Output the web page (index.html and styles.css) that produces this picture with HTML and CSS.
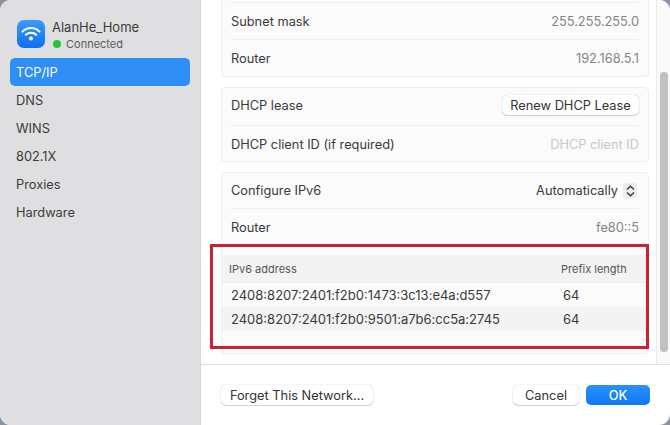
FILE: index.html
```html
<!DOCTYPE html>
<html>
<head>
    <title>Network Details</title>
    <link rel="stylesheet" href="styles.css">
</head>
<body>
    <div class="window">
        <div class="sidebar">
            <div class="network">
                <div class="wifiIcon">
                    <svg width="20" height="16" viewBox="0 0 20 16">
                        <path d="M1.5 5.6 A12 12 0 0 1 18.5 5.6" class="wave"/>
                        <path d="M4.8 8.8 A7.4 7.4 0 0 1 15.2 8.8" class="wave"/>
                        <circle cx="10" cy="12.6" r="2" fill="#fff"/>
                    </svg>
                </div>
                <div>
                    <div class="netName">AlanHe_Home</div>
                    <div class="netStatus"><span class="dot"></span>Connected</div>
                </div>
            </div>
            <div class="navItem active">TCP/IP</div>
            <div class="navItem">DNS</div>
            <div class="navItem">WINS</div>
            <div class="navItem">802.1X</div>
            <div class="navItem">Proxies</div>
            <div class="navItem">Hardware</div>
        </div>
        <div class="main">
            <div class="scrollArea">
                <div class="cards">
                    <div class="card cardClipped">
                        <div class="row rowSep"><span>Subnet mask</span><span class="value">255.255.255.0</span></div>
                        <div class="row rowSep"><span>Router</span><span class="value">192.168.5.1</span></div>
                    </div>
                    <div class="card">
                        <div class="row rowLease"><span>DHCP lease</span><button class="btn btnRenew">Renew DHCP Lease</button></div>
                        <div class="row rowSep rowLow"><span>DHCP client ID (if required)</span><span class="hint">DHCP client ID</span></div>
                    </div>
                    <div class="card">
                        <div class="row"><span>Configure IPv6</span>
                            <span class="select">Automatically
                                <span class="stepper">
                                    <svg width="9" height="12" viewBox="0 0 9 12">
                                        <path d="M1 4.5 L4.5 1.2 L8 4.5 M1 7.5 L4.5 10.8 L8 7.5" class="chev"/>
                                    </svg>
                                </span>
                            </span>
                        </div>
                        <div class="row rowSep rowLow"><span>Router</span><span class="value">fe80::5</span></div>
                        <table class="addrTable">
                            <tr class="headRow"><th class="colAddr">IPv6 address</th><th>Prefix length</th></tr>
                            <tr><td class="colAddr">2408:8207:2401:f2b0:1473:3c13:e4a:d557</td><td>64</td></tr>
                            <tr class="stripe"><td class="colAddr">2408:8207:2401:f2b0:9501:a7b6:cc5a:2745</td><td>64</td></tr>
                        </table>
                    </div>
                </div>
                <div class="scrollTrack"><div class="thumb"></div></div>
            </div>
            <div class="footer">
                <button class="btn btnForget">Forget This Network...</button>
                <div class="footerRight">
                    <button class="btn btnCancel">Cancel</button>
                    <button class="btn btnOk">OK</button>
                </div>
            </div>
        </div>
        <div class="redBox"></div>
    </div>
</body>
</html>
```

FILE: styles.css
```css
html, body {
    margin: 0;
    height: 100%;
    background: #8d93a0;
    overflow: hidden;
}

.window {
    position: relative;
    display: flex;
    width: 670px;
    height: 425px;
    border-radius: 11px;
    overflow: hidden;
    font-family: Inter, "Liberation Sans", sans-serif;
    font-size: 12.8px;
    color: #3a3a3a;
    background: #fff;
}

/* sidebar */
.sidebar {
    width: 201px;
    box-sizing: border-box;
    padding: 20px 10px 0 10px;
    background: #dfdfe1;
    border-right: 1px solid #d6d6d6;
    flex-shrink: 0;
}

.network {
    display: flex;
    gap: 7px;
    height: 38px;
    padding-left: 7px;
}

.wifiIcon {
    width: 28px;
    height: 28px;
    border-radius: 7px;
    background: linear-gradient(#3b9bfb, #0d6ff4);
    display: flex;
    align-items: center;
    justify-content: center;
}

.wave {
    fill: none;
    stroke: #fff;
    stroke-width: 2;
    stroke-linecap: round;
}

.netName {
    font-size: 13px;
    line-height: 14px;
}

.netStatus {
    display: flex;
    align-items: center;
    font-size: 11px;
    line-height: 14px;
    margin-top: 3px;
    color: #5c5c5c;
}

.dot {
    width: 8px;
    height: 8px;
    border-radius: 50%;
    background: #2cc23f;
    margin: 0 5px 0 1px;
}

.navItem {
    height: 28px;
    line-height: 29px;
    padding-left: 6px;
    border-radius: 5px;
}

.active {
    background: #2f8ff6;
    color: #fff;
}

/* right side */
.main {
    flex: 1;
    display: flex;
    flex-direction: column;
    min-width: 0;
}

.scrollArea {
    display: flex;
    height: 364px;
    border-bottom: 1px solid #e2e2e2;
    flex-shrink: 0;
    overflow: hidden;
}

.cards {
    flex: 1;
    padding: 0 6px 0 20px;
}

.card {
    width: 428px;
    box-sizing: border-box;
    border: 1px solid #eeeeee;
    border-radius: 4px;
    background: #fbfbfb;
    margin-bottom: 10px;
}

.cardClipped {
    border-top: none;
    border-radius: 0 0 4px 4px;
    padding-top: 2px;
}

.row {
    display: flex;
    justify-content: space-between;
    align-items: center;
    height: 35px;
    margin: 0 9px;
}

.cardClipped .row {
    height: 36px;
}

.rowSep {
    border-top: 1px solid #eeeeee;
}

.rowLow {
    height: 34px;
    padding-top: 1px;
}

.rowLease {
    height: 37px;
    padding-bottom: 3px;
    box-sizing: border-box;
}

.value {
    color: #858585;
}

.hint {
    color: #c8c8c8;
}

.select {
    display: flex;
    align-items: center;
    gap: 5px;
    margin-right: 2px;
}

.stepper {
    display: flex;
    align-items: center;
    justify-content: center;
    width: 14px;
    height: 15px;
    border-radius: 3px;
    background: #ececec;
}

.chev {
    fill: none;
    stroke: #3a3a3a;
    stroke-width: 1.4;
}

/* ipv6 table */
.addrTable {
    width: 100%;
    table-layout: fixed;
    border-collapse: collapse;
    margin-top: 11px;
    margin-bottom: 22px;
    font-size: 13px;
}

.addrTable th {
    height: 27px;
    padding: 0 0 0 7px;
    background: #f3f3f3;
    font-size: 11px;
    font-weight: normal;
    text-align: left;
    color: #555;
    border-bottom: 1px solid #ececec;
}

.addrTable td {
    height: 24px;
    padding: 0 0 0 9px;
}

.addrTable th.colAddr {
    width: 325px;
}

.stripe td {
    background: #f3f3f3;
}

.scrollTrack {
    width: 14px;
    flex-shrink: 0;
    border-left: 1px solid #ebebeb;
    background: #fafafa;
    padding: 72px 3px 12px 3px;
    box-sizing: border-box;
}

.thumb {
    width: 8px;
    height: 280px;
    border-radius: 4px;
    background: #c1c1c1;
}

/* footer */
.footer {
    flex: 1;
    display: flex;
    justify-content: space-between;
    align-items: flex-start;
    padding: 20px 20px 0 20px;
}

.footerRight {
    display: flex;
    gap: 7px;
}

.btn {
    height: 20px;
    padding: 0;
    font-family: inherit;
    font-size: 12.8px;
    color: #333;
    background: #fff;
    border: none;
    border-radius: 5px;
    box-shadow: 0 0 1px rgba(0, 0, 0, 0.35), 0 1px 1px rgba(0, 0, 0, 0.15);
}

.btnRenew {
    width: 137px;
}

.btnForget {
    width: 152px;
}

.btnCancel {
    width: 66px;
}

.btnOk {
    width: 64px;
    background: linear-gradient(#2a90fb, #0f78f6);
    color: #fff;
    font-weight: 500;
    box-shadow: none;
}

/* annotation drawn on top of the screenshot */
.redBox {
    position: absolute;
    left: 210px;
    top: 244px;
    width: 433px;
    height: 99px;
    border: 3px solid #cb2130;
}
```
